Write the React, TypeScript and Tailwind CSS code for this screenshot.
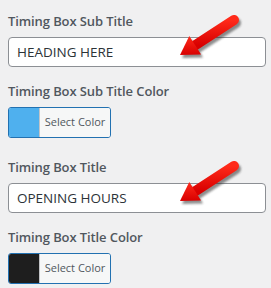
function Arrow() {
  // drawn in page coords of the first field, shifted by -170,-8
  return (
    <svg
      className="absolute left-[162px] top-[-29px] pointer-events-none"
      width="80"
      height="56"
      viewBox="170 8 80 56"
    >
      <defs>
        <linearGradient id="ag" x1="0" y1="0" x2="0" y2="1">
          <stop offset="0" stopColor="#ff2a1a" />
          <stop offset="1" stopColor="#d80000" />
        </linearGradient>
        <filter id="sh" x="-20%" y="-20%" width="140%" height="140%">
          <feGaussianBlur stdDeviation="1.2" />
        </filter>
      </defs>
      <g transform="translate(2,3)" fill="#333" stroke="#333" opacity="0.55" filter="url(#sh)">
        <line x1="195.2" y1="45.3" x2="234" y2="20" strokeWidth="10" strokeLinecap="round" />
        <polygon points="180,55 201.1,54.6 189.3,36" strokeWidth="0" />
      </g>
      <line x1="195.2" y1="45.3" x2="234" y2="20" stroke="url(#ag)" strokeWidth="10" strokeLinecap="round" />
      <polygon points="180,55 201.1,54.6 189.3,36" fill="url(#ag)" />
    </svg>
  );
}

function Label({ children }: { children: string }) {
  return (
    <p className="text-[13px] leading-5 font-semibold tracking-[-0.1px] text-[#50575e]">{children}</p>
  );
}

function TextField({ label, value }: { label: string; value: string }) {
  return (
    <div>
      <Label>{label}</Label>
      <div className="relative mt-[6px]">
        <div className="h-[30px] border border-[#8c8f94] rounded-[4px] bg-white px-2 flex items-center text-[13.5px] text-[#2c3338]">
          {value}
        </div>
        <Arrow />
      </div>
    </div>
  );
}

function ColorField({ label, color }: { label: string; color: string }) {
  return (
    <div>
      <Label>{label}</Label>
      <div className="mt-[6px] flex w-[103px] h-[31px] border border-[#2271b1] rounded-[3px] overflow-hidden">
        <div className="w-[30px] shrink-0" style={{ backgroundColor: color }} />
        <div className="flex-1 bg-[#f6f7f7] border-l border-[#c3c4c7] flex items-center justify-center text-[11px] text-[#50575e]">
          Select Color
        </div>
      </div>
    </div>
  );
}

export default function App() {
  return (
    <div
      className="w-[271px] h-[288px] bg-[#f0f0f1] pl-2 pr-[5px] pt-[11px] flex flex-col overflow-hidden"
      style={{ fontFamily: '"Open Sans", "Noto Sans", sans-serif' }}
    >
      <TextField label="Timing Box Sub Title" value="HEADING HERE" />
      <div className="mt-[14px]">
        <ColorField label="Timing Box Sub Title Color" color="#4fb0ee" />
      </div>
      <div className="mt-[19px]">
        <TextField label="Timing Box Title" value="OPENING HOURS" />
      </div>
      <div className="mt-[14px]">
        <ColorField label="Timing Box Title Color" color="#1e1e1e" />
      </div>
    </div>
  );
}
